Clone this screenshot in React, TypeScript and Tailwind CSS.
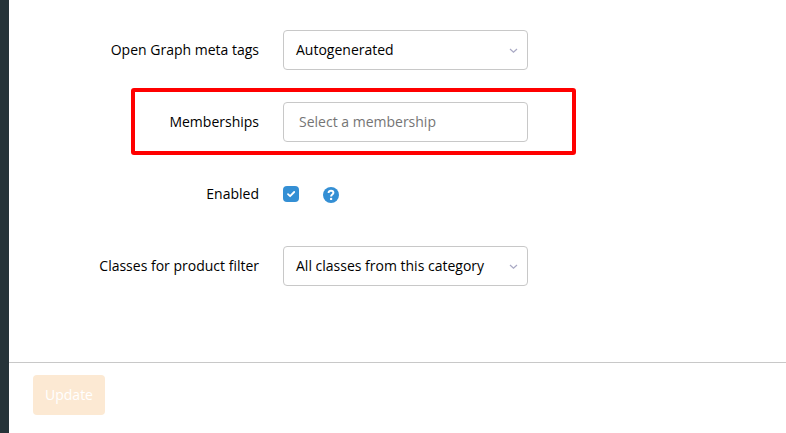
import type { ReactNode } from "react";

function Row({ label, children }: { label: string; children: ReactNode }) {
  return (
    <div className="flex h-10 items-center gap-6">
      <div className="w-[226px] text-right">{label}</div>
      {children}
    </div>
  );
}

function Select({ value }: { value: string }) {
  return (
    <div className="flex h-10 w-[245px] items-center justify-between rounded-[4px] border border-[#c8c8c8] pl-3 pr-[9px]">
      <span>{value}</span>
      <svg className="mt-px" width="9" height="6" viewBox="0 0 9 6" fill="none" stroke="#a9a9c4" strokeWidth="1.2">
        <path d="M1 1l3.5 3.3L8 1" />
      </svg>
    </div>
  );
}

export default function App() {
  return (
    <div className="flex h-[433px] w-[786px] overflow-hidden bg-white font-['Open_Sans',sans-serif] text-sm text-black">
      <div className="w-[9px] shrink-0 bg-[#253338]" />
      <div className="flex grow flex-col">
        <div className="relative flex h-[363px] flex-col gap-8 border-b border-[#c8c8c8] pl-6 pt-[30px]">
          <Row label="Open Graph meta tags">
            <Select value="Autogenerated" />
          </Row>
          <Row label="Memberships">
            <div className="flex h-10 w-[245px] items-center rounded-[4px] border border-[#c8c8c8] px-[15px] text-[#757575]">
              Select a membership
            </div>
          </Row>
          <Row label="Enabled">
            <div className="flex items-start gap-6">
              <div className="flex size-4 items-center justify-center rounded-[4px] bg-[#348fd4]">
                <svg width="16" height="16" viewBox="0 0 16 16" fill="none" stroke="white" strokeWidth="1.8" strokeLinecap="round" strokeLinejoin="round">
                  <path d="M5 8.2L7.1 10.2L11.2 6" />
                </svg>
              </div>
              <svg className="mt-px" width="16" height="16" viewBox="0 0 16 16" fill="none">
                <circle cx="8" cy="8" r="8" fill="#348fd4" />
                <path d="M5.6 6C5.6 4.5 6.6 3.8 8 3.8C9.5 3.8 10.4 4.6 10.4 5.8C10.4 7.5 8.1 7.5 8.1 9.4" stroke="white" strokeWidth="2" />
                <circle cx="8.1" cy="11.9" r="1.2" fill="white" />
              </svg>
            </div>
          </Row>
          <Row label="Classes for product filter">
            <Select value="All classes from this category" />
          </Row>
          <div className="absolute left-[122px] top-[88px] h-[67px] w-[445px] rounded-[3px] border-4 border-[#ff0000]" />
        </div>
        <div className="px-6 pt-3">
          <button className="h-10 w-[72px] rounded-[4px] bg-[#fce9d3] font-medium text-white">Update</button>
        </div>
      </div>
    </div>
  );
}
